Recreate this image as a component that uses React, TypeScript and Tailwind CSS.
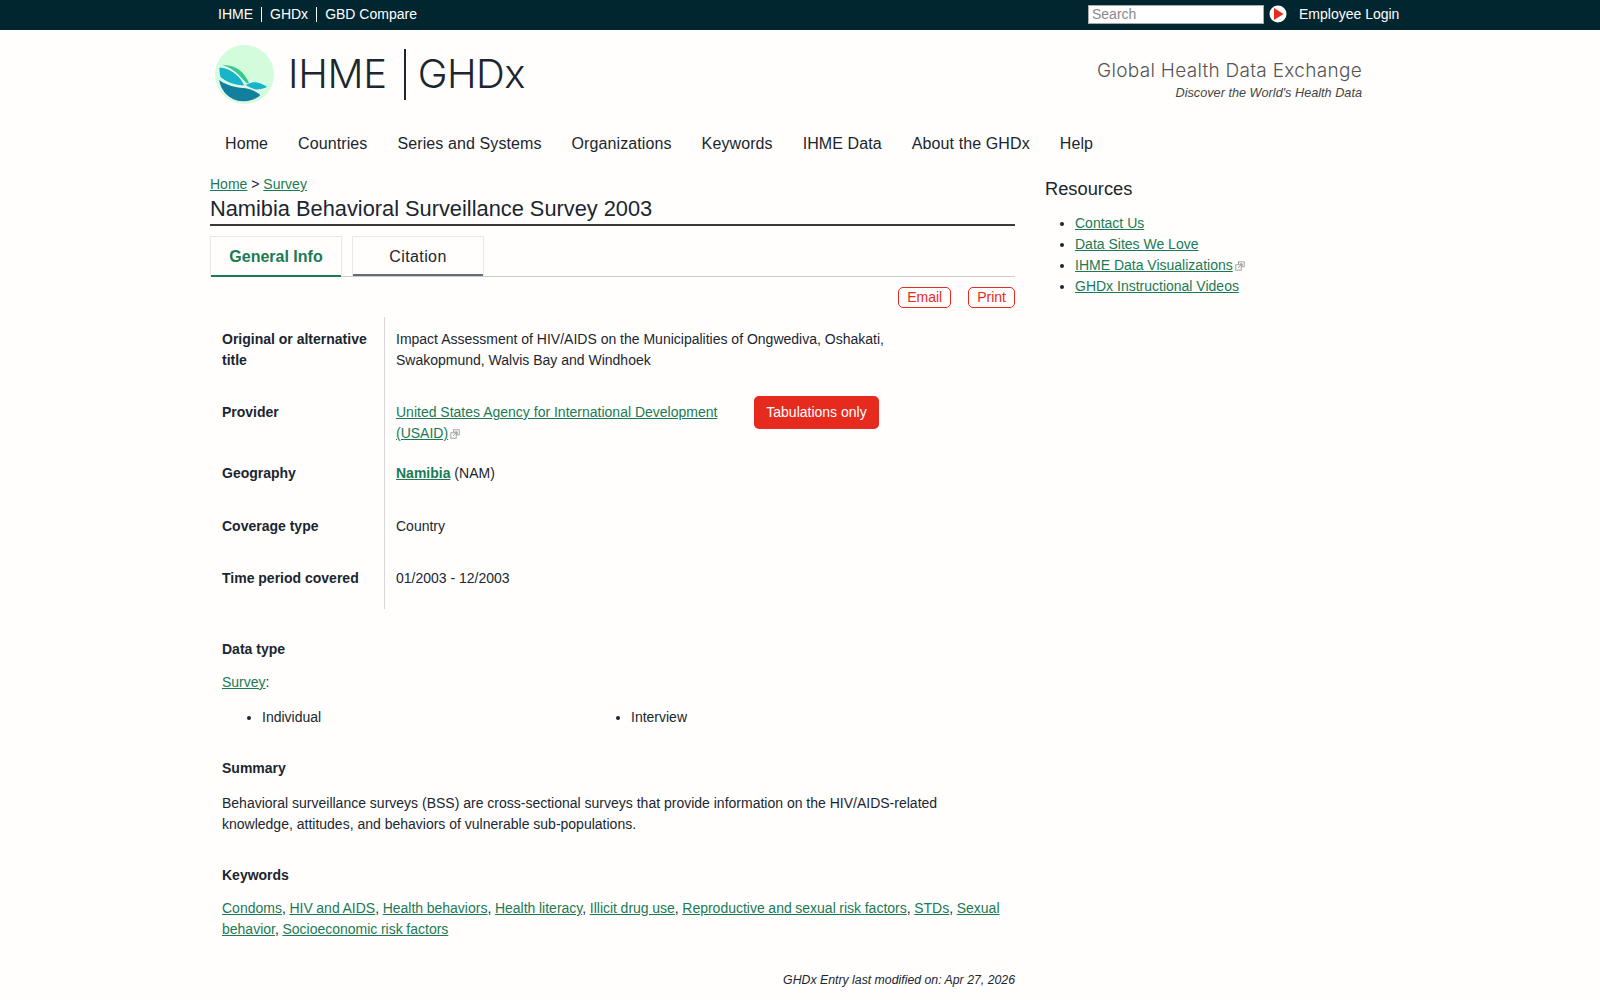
import React from "react";

const ExtIcon = () => (
  <svg viewBox="0 0 10 10" className="inline-block w-[10px] h-[10px] ml-[2px] align-[-1px]" fill="none" stroke="#9a9a9a" strokeWidth="0.9">
    <rect x="3.5" y="0.8" width="5.7" height="5" />
    <rect x="0.8" y="3.8" width="5.4" height="5.4" fill="#fff" />
    <path d="M3 7 L7 3 M4.8 2.8 H7.2 V5.2" />
  </svg>
);

const L = ({ children, bold }: { children: React.ReactNode; bold?: boolean }) => (
  <a href="#" className={"text-[#1a7a55] underline " + (bold ? "font-bold" : "")}>{children}</a>
);

const Logo = () => (
  <svg viewBox="0 0 59 59" className="w-[59px] h-[59px] shrink-0">
    <circle cx="29.5" cy="29.5" r="29.5" fill="#d3fcdc" />
    <path d="M3.5 34 C8 38 18 42 28 42.5 C34 43 40 45 46 50 C40 56 30 58 22 56 C12 53 5 45 3.5 34 Z" fill="#127f9c" stroke="#fff" strokeWidth="0.8" />
    <path d="M4 22 C12 22 20 27 26 34 C28 37 29 39 30 41 C20 41 10 37 5 32 C4 29 3.8 25 4 22 Z" fill="#18b5c9" stroke="#fff" strokeWidth="0.8" />
    <path d="M6 20 C16 19 24 23 29 29 C32 33 34 37 36 41 C32 39 30 37 27 34 C22 27 14 22 6 20 Z" fill="#35c98a" stroke="#fff" strokeWidth="0.5" />
    <path d="M30 40 C34 38 38 36 42 37 C47 38 50 40 53 42 C49 44 45 45 41 45 C37 44 33 42 30 40 Z" fill="#18b5c9" stroke="#fff" strokeWidth="0.7" />
  </svg>
);

export default function App() {
  return (
    <div className="bg-[#fffefd] text-[#1a2630] font-['Liberation_Sans',Arial,sans-serif] overflow-hidden h-[1000px]">
      <div className="h-[30px] bg-[#022630] text-white text-[14px]">
        <div className="w-[1192px] ml-[210px] flex items-center justify-between h-full pb-[2px]">
          <div className="flex items-center pl-[8px]">
            <span className="pr-[8px] border-r border-white leading-[15px]">IHME</span>
            <span className="px-[8px] border-r border-white leading-[15px]">GHDx</span>
            <span className="pl-[8px] leading-[15px]">GBD Compare</span>
          </div>
          <div className="flex items-center">
            <div className="w-[176px] h-[19px] bg-white border border-[#aaa] text-[#8a8a8a] text-[14px] leading-[17px] pl-[3px]">Search</div>
            <svg viewBox="0 0 18 18" className="w-[18px] h-[18px] ml-[5px]">
              <circle cx="9" cy="9" r="8.5" fill="#fff" />
              <path d="M5 3 L14.5 9 L5 15 Z" fill="#e62a1e" />
            </svg>
            <span className="ml-[12px] w-[103px]">Employee Login</span>
          </div>
        </div>
      </div>

      <div className="w-[1152px] ml-[210px]">
        <div className="h-[93px] flex items-center justify-between">
          <div className="flex items-center pl-[5px] pb-[5px]">
            <Logo />
            <span className="ml-[14px] text-[40px] font-['Inter',sans-serif] font-light tracking-[-0.3px] text-[#1a2630]">IHME</span>
            <span className="ml-[17px] mr-[12px] w-[2px] h-[51px] bg-[#1a2630]" />
            <span className="text-[40px] font-['Inter',sans-serif] font-light tracking-[-0.5px] text-[#1a2630]">GHDx</span>
          </div>
          <div className="text-right pt-[5px]">
            <div className="text-[19px] text-[#555] font-['Inter',sans-serif] font-light tracking-[0.3px] leading-[27px]">Global Health Data Exchange</div>
            <div className="text-[12.7px] italic text-[#444] leading-[18px]">Discover the World's Health Data</div>
          </div>
        </div>

        <nav className="flex gap-[30px] pl-[15px] pb-[2px] text-[16px] tracking-[0.1px] h-[44px] items-center">
          {["Home", "Countries", "Series and Systems", "Organizations", "Keywords", "IHME Data", "About the GHDx", "Help"].map((t) => (
            <span key={t}>{t}</span>
          ))}
        </nav>

        <div className="flex mt-[8px]">
          <main className="w-[805px] shrink-0">
            <div className="text-[14px] leading-[18px] mb-[2px]"><L>Home</L> &gt; <L>Survey</L></div>
            <h1 className="text-[21.8px] leading-[28px] pb-[1px] border-b-2 border-[#3a3a3a]">Namibia Behavioral Surveillance Survey 2003</h1>
            <div className="flex gap-[10px] mt-[10px] border-b border-[#ccc] h-[41px]">
              <div className="w-[132px] h-[41px] pb-[1px] border border-b-0 border-[#e8e8e8] shadow-[inset_0_-2px_0_#1a7a55] flex items-center justify-center font-bold text-[#1a7a55] text-[16px]">General Info</div>
              <div className="w-[132px] h-[40px] border border-b-0 border-[#e8e8e8] shadow-[inset_0_-2px_0_#5f6e76] flex items-center justify-center text-[16px] tracking-[0.4px]">Citation</div>
            </div>
            <div className="flex justify-end gap-[17px] mt-[10px] text-[14px] text-[#e62a1e]">
              <span className="border border-[#e62a1e] rounded-[5px] px-[8px] h-[21px] leading-[19px]">Email</span>
              <span className="border border-[#e62a1e] rounded-[5px] px-[8px] h-[21px] leading-[19px]">Print</span>
            </div>

            <div className="mt-[9px] text-[14px] leading-[21px] grid grid-cols-[175px_1fr]">
              <div className="font-bold pl-[12px] pr-[12px] border-r border-[#d8d8d8] pt-[12px] h-[77px]">Original or alternative title</div>
              <div className="pl-[11px] pt-[12px] w-[520px]">Impact Assessment of HIV/AIDS on the Municipalities of Ongwediva, Oshakati, Swakopmund, Walvis Bay and Windhoek</div>
              <div className="font-bold pl-[12px] border-r border-[#d8d8d8] pt-[8px] h-[65px]">Provider</div>
              <div className="pl-[11px] pt-[8px] flex items-start">
                <div className="w-[358px]"><L>United States Agency for International Development (USAID)</L><ExtIcon /></div>
                <div className="bg-[#e62a1e] text-white rounded-[5px] w-[125px] h-[33px] leading-[33px] text-center -mt-[6px]">Tabulations only</div>
              </div>
              <div className="font-bold pl-[12px] border-r border-[#d8d8d8] pt-[4px] h-[53px]">Geography</div>
              <div className="pl-[11px] pt-[4px]"><L bold>Namibia</L> (NAM)</div>
              <div className="font-bold pl-[12px] border-r border-[#d8d8d8] pt-[4px] h-[52px]">Coverage type</div>
              <div className="pl-[11px] pt-[4px]">Country</div>
              <div className="font-bold pl-[12px] border-r border-[#d8d8d8] pt-[4px] h-[45px]">Time period covered</div>
              <div className="pl-[11px] pt-[4px]">01/2003 - 12/2003</div>
            </div>

            <div className="pl-[12px] text-[14px] leading-[21px]">
              <h3 className="font-bold mt-[30px]">Data type</h3>
              <div className="mt-[12px]"><L>Survey</L>:</div>
              <div className="grid grid-cols-[390px_1fr] mt-[14px]">
                <div className="flex items-center"><span className="w-[4px] h-[4px] bg-[#1a2630] rounded-full ml-[25px] mr-[11px]" />Individual</div>
                <div className="flex items-center"><span className="w-[4px] h-[4px] bg-[#1a2630] rounded-full ml-[4px] mr-[11px]" />Interview</div>
              </div>
              <h3 className="font-bold mt-[30px]">Summary</h3>
              <p className="mt-[14px] w-[740px]">Behavioral surveillance surveys (BSS) are cross-sectional surveys that provide information on the HIV/AIDS-related knowledge, attitudes, and behaviors of vulnerable sub-populations.</p>
              <h3 className="font-bold mt-[30px]">Keywords</h3>
              <p className="mt-[12px] [word-spacing:-0.3px]">
                <L>Condoms</L>, <L>HIV and AIDS</L>, <L>Health behaviors</L>, <L>Health literacy</L>, <L>Illicit drug use</L>, <L>Reproductive and sexual risk factors</L>, <L>STDs</L>, <L>Sexual behavior</L>, <L>Socioeconomic risk factors</L>
              </p>
            </div>
            <div className="text-right italic text-[12.3px] leading-[20px] mt-[30px]">GHDx Entry last modified on: Apr 27, 2026</div>
          </main>
          <aside className="ml-[30px] flex-1">
            <h2 className="text-[18.3px] leading-[26px] mt-[1px]">Resources</h2>
            <ul className="mt-[11px] text-[14px] leading-[21px] list-disc pl-[30px]">
              <li><L>Contact Us</L></li>
              <li><L>Data Sites We Love</L></li>
              <li><L>IHME Data Visualizations</L><ExtIcon /></li>
              <li><L>GHDx Instructional Videos</L></li>
            </ul>
          </aside>
        </div>
      </div>
    </div>
  );
}
